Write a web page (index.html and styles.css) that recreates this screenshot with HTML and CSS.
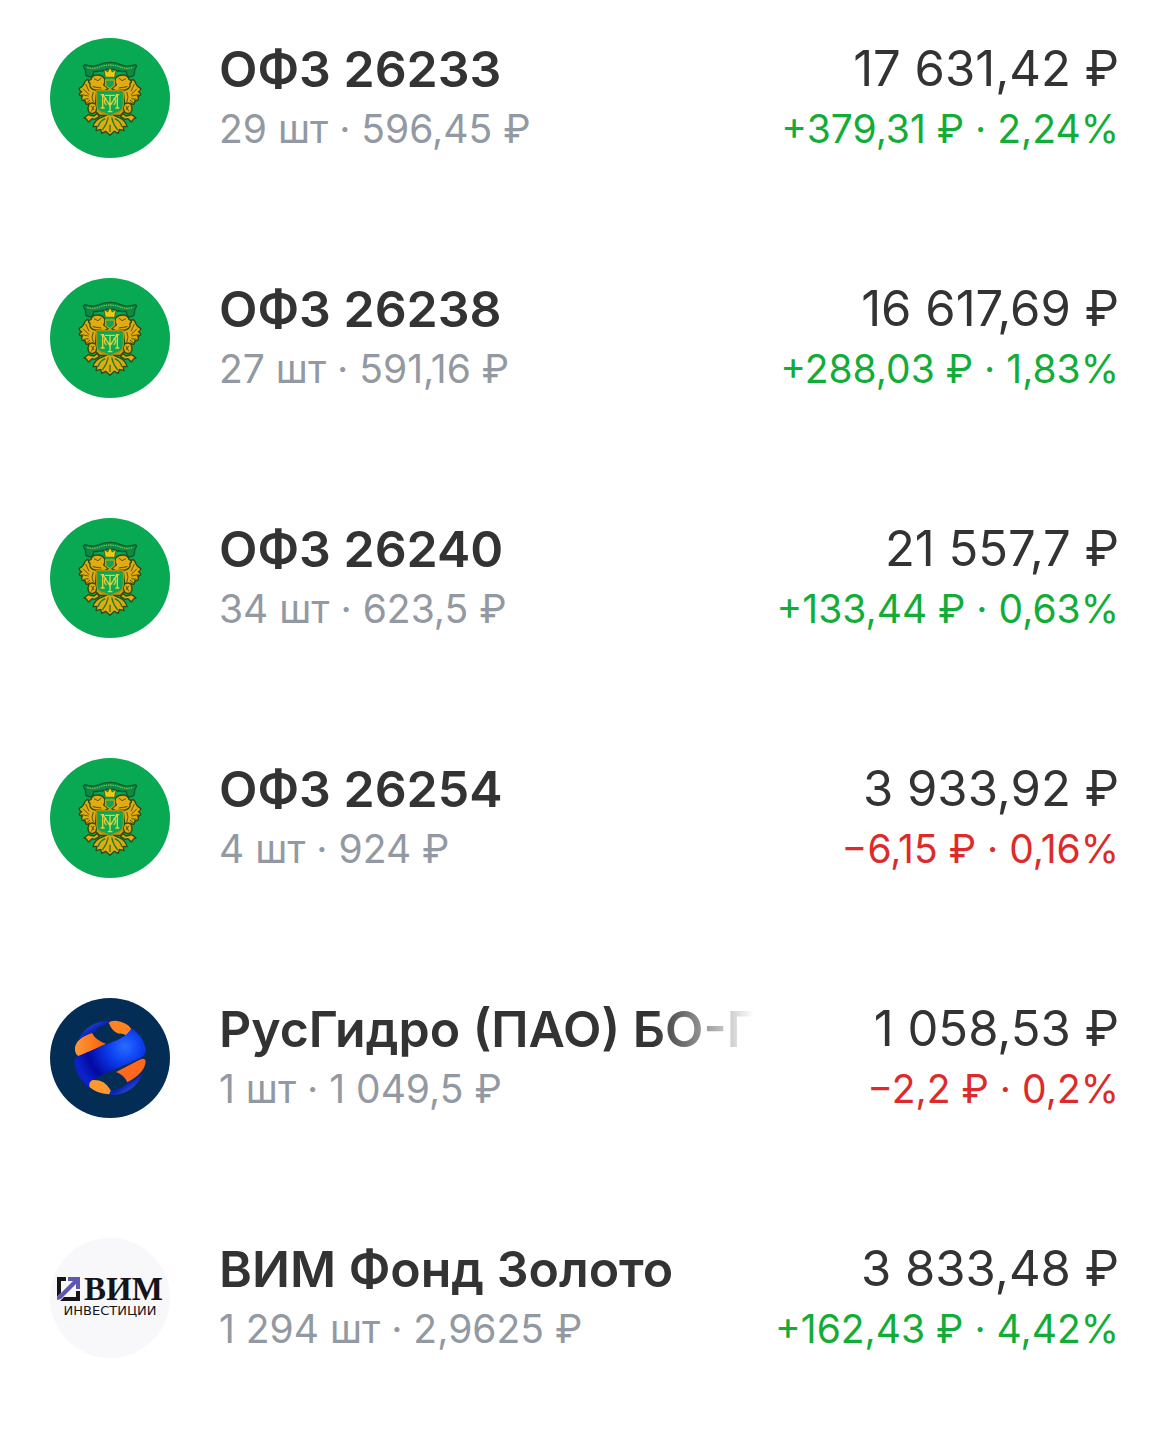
FILE: index.html
```html
<!DOCTYPE html>
<html lang="ru">
<head>
    <meta charset="UTF-8">
    <meta name="viewport" content="width=device-width, initial-scale=1.0">
    <title>Портфель</title>
    <link rel="stylesheet" href="styles.css">
</head>
<body>

<svg class="symbols" aria-hidden="true">
    <!-- Ministry of Finance emblem, used by every bond row -->
    <symbol id="minfin" viewBox="30 24 360 360">
        <circle cx="210" cy="204" r="180" fill="#09a853"/>
        <g stroke="#2f4a10" stroke-width="4" stroke-linejoin="round">
            <path stroke="#0a5a30" fill="#0d8a44" d="M130 108l4-4q24 8 44 0q32-14 64 0q20 8 44 0l4 4l-6 12l-2 16q-14 8-20 2l-4-14q-24 2-36-6q-12-3-24 0q-12 8-36 6l-4 14q-6 6-20-2l-2-16z"/>
            <path fill="#c99c12" d="M152 160h116l4 66l-30 30h-64l-30-30z"/>
            <g id="wing" fill="#e0ac12">
                <path d="M143 148q-8 2-11 14q-4 9-15 14q2 7 8 9q-6 3-7 9q4 4 9 4q-4 6-1 12q4 3 9 1q0 7 4 12q6 0 10-4q2 8 8 12q6-2 9-8l4-38l-4-16l-14-6z"/>
                <path d="M150 160q-10-6 3-12q3-12 17-13q18-1 24 12q3 10-3 18l14 10l-10 7l-30-2q-18-4-15-20z"/>
                <path d="M148 222q10-6 18 0q8 12 0 24q-8 8-18 2q-8-12 0-26zM132 264l12-10l18 4l10-8l6 10l-14 8l-8-2l-10 10l-8-10z"/>
            </g>
            <use href="#wing" transform="matrix(-1 0 0 1 420 0)"/>
            <path fill="#e0ac12" d="M210 250l-20 10q-26 8-31 30l12-1l-3 13l14-4l3 12l12-6l13 12l13-12l12 6l3-12l14 4l-3-13l12 1q-5-22-31-30z"/>
            <path stroke-width="2" fill="#f5c414" d="M196 142l-4-24l11 8l7-14l7 14l11-8l-4 24z"/>
            <path fill="#09a853" stroke="#c49a16" d="M197 150h26v16l-13 10l-13-10z"/>
            <path fill="#09a853" stroke="#a98f12" d="M170 182h80v42q0 20-26 26l-14 8l-14-8q-26-6-26-26z"/>
        </g>
        <path fill="none" stroke="#c2d052" stroke-width="3" stroke-dasharray="4 3" d="M142 113q22 5 40-3q28-10 56 0q18 8 40 3"/>
        <g fill="none" stroke="#5c500c" stroke-width="3">
            <path id="feathers" d="M137 162l10 22M129 176l18 18M124 194l22 4M130 208l16-2M138 220l12-10M160 186q-8 16 0 30M162 146l12 6l10-8M158 170l26 4M154 228l8 12M162 228l-8 16"/>
            <use href="#feathers" transform="matrix(-1 0 0 1 420 0)"/>
        </g>
        <g fill="none" stroke="#1d7a2a" stroke-width="4">
            <path d="M205 262q-4 20-18 38M215 262q4 20 18 38M196 266q-16 6-22 24M224 266q16 6 22 24M210 284v22"/>
        </g>
        <!-- monogram on the shield -->
        <g fill="none" stroke="#e6cf3c" stroke-width="4">
            <path d="M182 194h10M188 194v40M182 234h12M228 194h10M232 194v40M226 234h12M189 195l21 32l21-32M194 196h32M210 196v49M203 245h14"/>
            <path d="M199 203q-12 10 0 22M221 203q12 10 0 22"/>
        </g>
    </symbol>
</svg>

<main>
    <ul class="holdings">
        <li class="holding">
            <svg class="logo" role="img" aria-label="Минфин"><use href="#minfin"/></svg>
            <div class="info">
                <h2 class="name">ОФЗ 26233</h2>
                <p class="details">29 шт · 596,45 ₽</p>
            </div>
            <div class="value">
                <p class="total">17 631,42 ₽</p>
                <p class="change up">+379,31 ₽ · 2,24%</p>
            </div>
        </li>
        <li class="holding">
            <svg class="logo" role="img" aria-label="Минфин"><use href="#minfin"/></svg>
            <div class="info">
                <h2 class="name">ОФЗ 26238</h2>
                <p class="details">27 шт · 591,16 ₽</p>
            </div>
            <div class="value">
                <p class="total">16 617,69 ₽</p>
                <p class="change up">+288,03 ₽ · 1,83%</p>
            </div>
        </li>
        <li class="holding">
            <svg class="logo" role="img" aria-label="Минфин"><use href="#minfin"/></svg>
            <div class="info">
                <h2 class="name">ОФЗ 26240</h2>
                <p class="details">34 шт · 623,5 ₽</p>
            </div>
            <div class="value">
                <p class="total">21 557,7 ₽</p>
                <p class="change up">+133,44 ₽ · 0,63%</p>
            </div>
        </li>
        <li class="holding">
            <svg class="logo" role="img" aria-label="Минфин"><use href="#minfin"/></svg>
            <div class="info">
                <h2 class="name">ОФЗ 26254</h2>
                <p class="details">4 шт · 924 ₽</p>
            </div>
            <div class="value">
                <p class="total">3 933,92 ₽</p>
                <p class="change down">−6,15 ₽ · 0,16%</p>
            </div>
        </li>
        <li class="holding">
            <svg class="logo" viewBox="30 24 360 360" role="img" aria-label="РусГидро">
                <defs>
                    <radialGradient id="band" gradientUnits="userSpaceOnUse" cx="255" cy="170" r="150">
                        <stop offset="0" stop-color="#2a6cff"/>
                        <stop offset="0.35" stop-color="#0a3cee"/>
                        <stop offset="0.75" stop-color="#0309a0"/>
                        <stop offset="1" stop-color="#0b22c8"/>
                    </radialGradient>
                    <linearGradient id="edge" x1="0" y1="0" x2="1" y2="1">
                        <stop offset="0" stop-color="#3f74ee"/>
                        <stop offset="0.5" stop-color="#0a20b8"/>
                        <stop offset="1" stop-color="#4f80f2"/>
                    </linearGradient>
                    <linearGradient id="orange" x1="0" y1="0" x2="1" y2="0">
                        <stop offset="0" stop-color="#ff9838"/>
                        <stop offset="1" stop-color="#fb5f08"/>
                    </linearGradient>
                </defs>
                <circle cx="210" cy="204" r="180" fill="#032d55"/>
                <path fill="url(#edge)" d="M112 152Q142 92 212 92L208 99Q176 107 158 130Q132 137 112 152z"/>
                <path fill="url(#orange)" d="M156 129Q168 152 198 161Q162 178 117 199Q104 194 105 174Q108 145 156 129z"/>
                <path fill="#ff8420" d="M206 98Q216 89 242 95Q268 103 274 118Q268 130 258 136Q250 130 236 131Q216 124 206 98z"/>
                <path fill="url(#band)" d="M102 213Q103 202 120 196L234 149Q265 135 274 115Q308 137 318 176Q319 194 303 203L192 252Q158 265 147 292Q108 263 102 213z"/>
                <path fill="#ff681c" d="M228 246L299 209Q316 201 317 214Q315 249 262 277Q252 254 228 246z"/>
                <path fill="#ff982f" d="M149 292Q144 277 158 270Q193 268 210 298Q218 311 205 313Q171 311 149 292z"/>
                <path fill="url(#edge)" d="M212 302Q248 297 262 278Q295 266 311 246Q280 318 207 315z"/>
            </svg>
            <div class="info">
                <h2 class="name long">РусГидро (ПАО) БО-П</h2>
                <p class="details">1 шт · 1 049,5 ₽</p>
            </div>
            <div class="value">
                <p class="total">1 058,53 ₽</p>
                <p class="change down">−2,2 ₽ · 0,2%</p>
            </div>
        </li>
        <li class="holding">
            <svg class="logo" viewBox="0 0 120 120" role="img" aria-label="ВИМ Инвестиции">
                <circle cx="60" cy="60" r="60" fill="#f8f8fb"/>
                <path fill="#151419" d="M7 39h9v4h-5v12l-4 4zM30 53v10H10l4-4h12v-6z"/>
                <path fill="#5f58b0" d="M18 39h12v12h-4v-5L11 61l-4 1v-3l16-16h-5z"/>
                <text class="logo-title" x="34" y="62">ВИМ</text>
                <text class="logo-caption" x="60" y="77">ИНВЕСТИЦИИ</text>
            </svg>
            <div class="info">
                <h2 class="name">ВИМ Фонд Золото</h2>
                <p class="details">1 294 шт · 2,9625 ₽</p>
            </div>
            <div class="value">
                <p class="total">3 833,48 ₽</p>
                <p class="change up">+162,43 ₽ · 4,42%</p>
            </div>
        </li>
    </ul>
</main>

</body>
</html>
```
FILE: styles.css
```css
body {
    font-family: Inter, "Liberation Sans", sans-serif;
    margin: 0;
    background-color: #fff;
    color: #333;
}

h2,
p {
    margin: 0;
    font-weight: 400;
    white-space: nowrap;
}

.symbols {
    display: block;
    width: 0;
    height: 0;
}

.holdings {
    list-style-type: none;
    margin: 0;
    padding: 0;
}

.holding {
    display: flex;
    align-items: flex-start;
    padding: 38px 38px 82px 50px;
}

.logo {
    flex: none;
    width: 120px;
    height: 120px;
    margin-right: 49px;
}

.logo-title {
    font: bold 33px "Liberation Serif", serif;
    fill: #151419;
}

.logo-caption {
    font: 13px "DejaVu Sans", sans-serif;
    text-anchor: middle;
    fill: #151419;
}

.info {
    flex: 8 1 0;
    min-width: 0;
    margin-right: 30px;
}

.value {
    display: flex;
    flex: 5 1 0;
    flex-direction: column;
    align-items: flex-end;
    min-width: 0;
}

.name,
.total {
    line-height: 62px;
}

.name {
    overflow: hidden;
    font-size: 50px;
    font-weight: 600;
}

/* long names fade out instead of wrapping */
.long {
    mask-image: linear-gradient(to right, #000 calc(100% - 100px), transparent);
}

.total {
    font-size: 49px;
}

.details,
.change {
    font-size: 39px;
    line-height: 58px;
}

.details {
    color: #9299a2;
}

.up {
    color: #12ad37;
}

.down {
    color: #dd2b2b;
}
```
